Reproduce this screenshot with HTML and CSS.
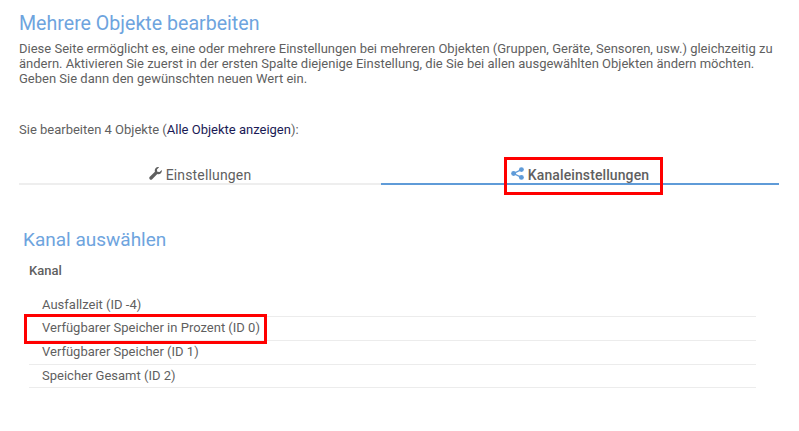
FILE: index.html
```html
<!DOCTYPE html>
<html lang="de">
<head>
<meta charset="utf-8">
<title>Mehrere Objekte bearbeiten</title>
<link rel="stylesheet" href="styles.css">
</head>
<body>
<main class="page">
  <h1 class="title">Mehrere Objekte bearbeiten</h1>
  <p class="intro">Diese Seite ermöglicht es, eine oder mehrere Einstellungen bei mehreren Objekten (Gruppen, Geräte, Sensoren, usw.) gleichzeitig zu ändern. Aktivieren Sie zuerst in der ersten Spalte diejenige Einstellung, die Sie bei allen ausgewählten Objekten ändern möchten. Geben Sie dann den gewünschten neuen Wert ein.</p>
  <p class="count">Sie bearbeiten 4 Objekte (<a class="link" href="#">Alle Objekte anzeigen</a>):</p>
  <nav class="tabs">
    <a class="tab tab-first" href="#">
      <svg class="icon" viewBox="0 0 16 16" aria-hidden="true"><path fill="#5f5f5f" d="M15.700 3.600c.4 1.400 0 3-1.100 4.100-1.200 1.200-2.900 1.500-4.400 1L3.900 15c-.9.9-2.200.9-3 0-.8-.8-.8-2.100.1-3l6.300-6.300c-.5-1.500-.2-3.200 1-4.400C9.400.2 11-.2 12.400.3L9.700 3l.5 2.800 2.800.5z"/></svg>
      Einstellungen
    </a>
    <a class="tab tab-active" href="#">
      <svg class="icon" viewBox="0 0 16 16" aria-hidden="true"><g fill="#5f9bd8"><circle cx="3.200" cy="8" r="3"/><circle cx="12.800" cy="3.200" r="3"/><circle cx="12.800" cy="12.800" r="3"/></g><path stroke="#5f9bd8" stroke-width="1.600" fill="none" d="M12.800 3.200 3.200 8l9.600 4.800"/></svg>
      Kanaleinstellungen
      <span class="mark mark-tab"></span>
    </a>
  </nav>
  <section class="channels">
    <h2 class="subtitle">Kanal auswählen</h2>
    <div class="head">Kanal</div>
    <ul class="rows">
      <li class="row">Ausfallzeit (ID -4)</li>
      <li class="row">Verfügbarer Speicher in Prozent (ID 0)<span class="mark mark-row"></span></li>
      <li class="row">Verfügbarer Speicher (ID 1)</li>
      <li class="row">Speicher Gesamt (ID 2)</li>
    </ul>
  </section>
</main>
</body>
</html>
```
FILE: styles.css
```css
* { box-sizing: border-box; }
html, body { margin: 0; background: #fff; }
body {
  font-family: Roboto, "Liberation Sans", sans-serif;
  color: #5f5f5f;
  font-size: 13px;
  line-height: 15px;
}
.page { width: 799px; height: 431px; padding: 12px 20px 0 19px; overflow: hidden; }
.title { margin: 0; font-size: 19.600px; line-height: 24px; font-weight: 400; color: #6ea4de; }
.intro { margin: 5px 0 0; width: 760px; }
.count { margin: 36px 0 0; }
.link { color: #1a1a55; text-decoration: none; }
.tabs { display: flex; margin-top: 28px; }
.tab {
  position: relative;
  flex: 1 1 0;
  display: flex;
  justify-content: center;
  align-items: center;
  gap: 4px;
  height: 20px;
  padding-top: 2px;
  border-bottom: 2px solid #eeeeee;
  color: #5f5f5f;
  text-decoration: none;
  font-size: 14px;
  letter-spacing: .16px;
}
.tab-first { flex: 0 0 362px; }
.tab-active { border-bottom-color: #5f9bd8; font-weight: 500; letter-spacing: .1px; }
.icon { width: 13px; height: 13px; margin-top: -3px; }
.mark { position: absolute; border: 3px solid #ff0000; pointer-events: none; }
.mark-tab { left: 123px; top: -8px; width: 159px; height: 38px; }
.channels { padding: 0 23px 0 4px; margin-top: 43px; }
.subtitle { margin: 0; font-size: 19px; line-height: 24px; font-weight: 400; color: #6ea4de; }
.head { margin-top: 11px; padding-left: 6px; font-weight: 500; font-size: 13px; }
.rows { list-style: none; margin: 15.500px 0 0 6px; padding: 0; }
.row { position: relative; height: 23.700px; padding: 0 0 0 13px; line-height: 22px; border-bottom: 1px solid #ececec; }
.mark-row { left: -5px; top: -3.500px; width: 243px; height: 30px; }
```
